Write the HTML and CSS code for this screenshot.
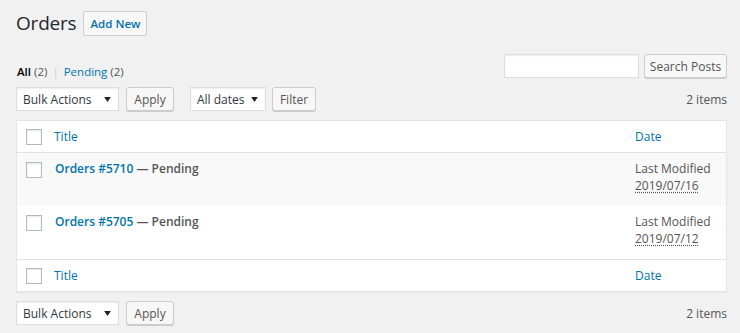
FILE: index.html
```html
<!DOCTYPE html>
<html>
<head>
<meta charset="utf-8">
<link rel="stylesheet" href="styles.css">
</head>
<body>
<div class="wrap">
  <div class="head">
    <h1>Orders</h1>
    <a class="btn add-new">Add New</a>
  </div>
  <div class="subrow">
    <ul class="views">
      <li class="current">All <span class="count">(2)</span></li>
      <li class="sep">|</li>
      <li><a>Pending <span class="count">(2)</span></a></li>
    </ul>
    <div class="search-box">
      <div class="input"></div>
      <a class="btn w-search">Search Posts</a>
    </div>
  </div>
  <div class="tablenav">
    <div class="actions">
      <div class="select w-bulk"><span>Bulk Actions</span><svg width="7" height="5" viewBox="0 0 8 6"><path d="M0 0h8L4 6z" fill="#222"/></svg></div>
      <a class="btn w-apply">Apply</a>
    </div>
    <div class="actions">
      <div class="select w-dates"><span>All dates</span><svg width="7" height="5" viewBox="0 0 8 6"><path d="M0 0h8L4 6z" fill="#222"/></svg></div>
      <a class="btn w-filter">Filter</a>
    </div>
    <div class="num">2 items</div>
  </div>
  <div class="table">
    <div class="row thead">
      <div class="cb"><span class="box"></span></div>
      <div class="title"><a>Title</a></div>
      <div class="date"><a>Date</a></div>
    </div>
    <div class="row item alt">
      <div class="cb"><span class="box"></span></div>
      <div class="title"><strong><a>Orders #5710</a> — Pending</strong></div>
      <div class="date">Last Modified<br><abbr>2019/07/16</abbr></div>
    </div>
    <div class="row item">
      <div class="cb"><span class="box"></span></div>
      <div class="title"><strong><a>Orders #5705</a> — Pending</strong></div>
      <div class="date">Last Modified<br><abbr>2019/07/12</abbr></div>
    </div>
    <div class="row tfoot">
      <div class="cb"><span class="box"></span></div>
      <div class="title"><a>Title</a></div>
      <div class="date"><a>Date</a></div>
    </div>
  </div>
  <div class="tablenav bottom">
    <div class="actions">
      <div class="select w-bulk"><span>Bulk Actions</span><svg width="7" height="5" viewBox="0 0 8 6"><path d="M0 0h8L4 6z" fill="#222"/></svg></div>
      <a class="btn w-apply">Apply</a>
    </div>
    <div class="num">2 items</div>
  </div>
</div>
</body>
</html>
```
FILE: styles.css
```css
* { box-sizing: border-box; }
html, body { margin: 0; background: #f1f1f1; }
body {
  font-family: "Open Sans", "Noto Sans", sans-serif;
  font-size: 12px;
  color: #444;
  width: 740px;
  height: 333px;
  overflow: hidden;
}
a { color: #0073aa; text-decoration: none; }
.wrap { padding: 11px 13px 0 16px; }

.head { display: flex; align-items: center; gap: 7px; height: 25px; }
h1 {
  margin: 0;
  font-size: 19px;
  font-weight: 400;
  color: #23282d;
  line-height: 25px;
  letter-spacing: -0.2px;
}

.btn {
  display: inline-flex;
  align-items: center;
  justify-content: center;
  height: 24px;
  padding: 0;
  border: 1px solid #ccc;
  border-radius: 3px;
  background: #f7f7f7;
  box-shadow: 0 1px 0 #ccc;
  color: #555;
  font-size: 12px;
  white-space: nowrap;
}
.add-new {
  width: 64px;
  color: #0073aa;
  font-weight: 600;
  font-size: 11.5px;
  border-radius: 2px;
  box-shadow: none;
  height: 25px;
}
.w-search { width: 83px; }
.w-apply { width: 48px; }
.w-filter { width: 44px; }

.subrow {
  display: flex;
  justify-content: space-between;
  align-items: flex-end;
  margin-top: 18px;
}
.views {
  list-style: none;
  margin: 0 0 -3px 1px;
  padding: 0;
  display: flex;
  gap: 5px;
  color: #666;
  line-height: 18px;
  font-size: 11.5px;
}
.views .current { color: #000; font-weight: 600; }
.views .current .count { font-weight: 400; color: #555; }
.views .count { color: #555; }
.views .sep { color: #ccc; }
.search-box { display: flex; gap: 5px; }
.search-box .input {
  width: 135px;
  height: 24px;
  background: #fff;
  border: 1px solid #ddd;
  box-shadow: inset 0 1px 2px rgba(0,0,0,.07);
}

.tablenav {
  display: flex;
  align-items: center;
  gap: 16px;
  height: 24px;
  margin: 9px 0;
}
.tablenav .actions { display: flex; gap: 7px; }
.tablenav .actions + .actions { gap: 6px; }
.tablenav .num { margin-left: auto; color: #555; }
.select {
  height: 24px;
  display: flex;
  align-items: center;
  justify-content: space-between;
  padding: 0 7px 0 6px;
  background: #fff;
  border: 1px solid #ddd;
  box-shadow: inset 0 1px 2px rgba(0,0,0,.07);
  color: #32373c;
}
.w-bulk { width: 103px; }
.w-dates { width: 76px; }

.table {
  background: #fff;
  border: 1px solid #e5e5e5;
  box-shadow: 0 1px 1px rgba(0,0,0,.04);
}
.row { display: flex; }
.row .cb { width: 37px; flex: none; padding-left: 9px; }
.box {
  display: block;
  width: 16px;
  height: 16px;
  border: 1px solid #b4b9be;
  background: #fff;
  box-shadow: inset 0 1px 2px rgba(0,0,0,.1);
}
.row .title { flex: 1; }
.row .date { width: 91px; flex: none; }
.thead, .tfoot { height: 32px; align-items: center; }
.thead { border-bottom: 1px solid #e1e1e1; }
.tfoot { border-top: 1px solid #e1e1e1; }
.item { height: 53px; padding-top: 7px; line-height: 17px; }
.item.alt { background: #f9f9f9; }
.item .cb { padding-top: 2px; }
.item .title { padding-left: 1px; color: #555; }
.item .title strong { font-weight: 600; }
.item .date { color: #555; }
abbr { text-decoration: underline dotted; text-underline-offset: 2px; }
```
